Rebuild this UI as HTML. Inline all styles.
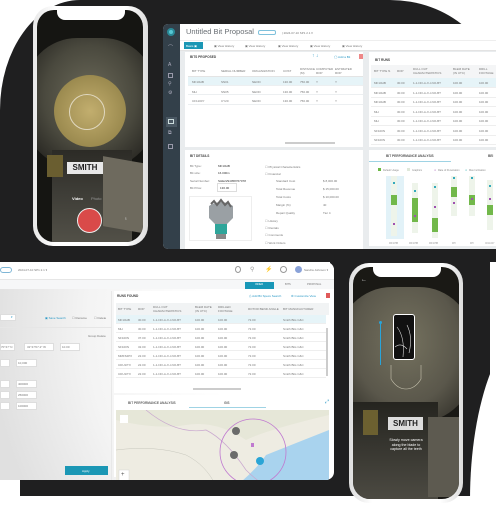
<!DOCTYPE html>
<html><head><meta charset="utf-8"><style>
*{margin:0;padding:0;box-sizing:border-box}
body{width:496px;height:496px;overflow:hidden;background:#fff;position:relative;font-family:"Liberation Sans",sans-serif}
.a{position:absolute}
.t{position:absolute;font-size:3px;color:#777;white-space:nowrap}
.hd{position:absolute;font-size:3.2px;color:#444;font-weight:bold;white-space:nowrap}
.row{position:absolute;height:9px;border-bottom:1px solid #eceff1;}
</style></head><body>
<div class="a" style="left:0;top:0;width:496px;height:262px;background:#1f1f20;border-top-left-radius:80px 110px;border-top-right-radius:106px 92px"></div>
<div class="a" style="left:330px;top:240px;width:160px;height:256px;background:#1f1f20"></div>
<div class="a" style="left:20px;top:460px;width:330px;height:36px;background:#1f1f20;border-top-left-radius:40px 20px"></div>
<div class="a" style="left:470px;top:320px;width:80px;height:200px;background:#fff;border-top-left-radius:70px 180px"></div>

<div class="a" style="left:0;top:262px;width:334px;height:218px;background:radial-gradient(circle at 110% 30%,#fff 40%,#f4f4f4 70%,#e0e0e0 95%);border-radius:0 8px 8px 0;overflow:hidden">
 <div class="a" style="left:0;top:0;width:334px;height:18px;background:#fff;border-bottom:1px solid #e6e6e6"></div>
 <div class="a" style="left:0;top:5px;width:12px;height:6px;border:1px solid #7fb6d6;border-radius:3px"></div>
 <div class="t" style="left:18px;top:6px">2024-07-10 SP1 2.1 ▾</div>
 <div class="a" style="left:235px;top:4px;width:6px;height:7px;border:1px solid #999;border-radius:50%"></div>
 <div class="t" style="left:250px;top:4px;font-size:6px;color:#999">⚲</div>
 <div class="t" style="left:265px;top:4px;font-size:6px;color:#999">⚡</div>
 <div class="a" style="left:280px;top:4px;width:7px;height:7px;border:1px solid #999;border-radius:50%"></div>
 <div class="a" style="left:295px;top:4px;width:7px;height:7px;background:#8aa2d8;border-radius:50%"></div>
 <div class="t" style="left:304px;top:6px">Sandra Johnson ▾</div>
 <div class="a" style="left:0;top:18px;width:334px;height:9px;background:#f6f7f8"></div>
 <div class="a" style="left:245px;top:20px;width:29px;height:7px;background:#1897b7"></div>
 <div class="t" style="left:255px;top:21px;color:#fff;font-size:2.6px">INNER</div>
 <div class="t" style="left:285px;top:21px;font-size:2.6px">BITS</div>
 <div class="t" style="left:307px;top:21px;font-size:2.6px">PROPOSAL</div>
 <div class="a" style="left:0;top:29px;width:112px;height:189px;border-right:1px solid #e8e8e8"></div>
 <div class="a" style="left:0;top:52px;width:16px;height:7px;border:1px solid #ddd;background:#fff"></div>
 <div class="t" style="left:11px;top:53px;color:#2b99c6">▾</div>
 <div class="t" style="left:45px;top:54px;color:#2b99c6">▣ Save Search</div>
 <div class="t" style="left:72px;top:54px">☐ Rename</div>
 <div class="t" style="left:94px;top:54px">☐ Delete</div>
 <div class="a" style="left:0;top:65px;width:112px;height:1px;background:#e6e6e6"></div>
 <div class="t" style="left:88px;top:72px">Group  Delete</div>
 <div class="a" style="left:0;top:81px;width:15px;height:8px;border:1px solid #ddd;background:#fff"></div>
 <div class="t" style="left:1px;top:83px">70°47′ N</div>
 <div class="a" style="left:24px;top:81px;width:30px;height:8px;border:1px solid #ddd;background:#fff"></div>
 <div class="t" style="left:27px;top:83px">32°47′07.2″ W</div>
 <div class="a" style="left:60px;top:81px;width:20px;height:8px;border:1px solid #ddd;background:#fff"></div>
 <div class="t" style="left:62px;top:83px">10.00</div>
 <div class="a" style="left:0;top:97px;width:10px;height:8px;border:1px solid #ddd;background:#fff"></div>
 <div class="a" style="left:16px;top:97px;width:21px;height:8px;border:1px solid #ddd;background:#fff"></div>
 <div class="t" style="left:18px;top:99px">10,000</div>
 <div class="a" style="left:0;top:118px;width:10px;height:8px;border:1px solid #ddd;background:#fff"></div>
 <div class="a" style="left:16px;top:118px;width:21px;height:8px;border:1px solid #ddd;background:#fff"></div>
 <div class="t" style="left:18px;top:120px">400000</div>
 <div class="a" style="left:0;top:129px;width:10px;height:8px;border:1px solid #ddd;background:#fff"></div>
 <div class="a" style="left:16px;top:129px;width:21px;height:8px;border:1px solid #ddd;background:#fff"></div>
 <div class="t" style="left:18px;top:131px">250000</div>
 <div class="a" style="left:0;top:140px;width:10px;height:8px;border:1px solid #ddd;background:#fff"></div>
 <div class="a" style="left:16px;top:140px;width:21px;height:8px;border:1px solid #ddd;background:#fff"></div>
 <div class="t" style="left:18px;top:142px">100000</div>
 <div class="a" style="left:65px;top:204px;width:43px;height:9px;background:#1b97b5"></div>
 <div class="t" style="left:82px;top:207px;color:#fff">Apply</div>
 <div class="a" style="left:114px;top:29px;width:217px;height:102px;background:#fff"></div>
 <div class="hd" style="left:117px;top:32px">RUNS FOUND</div>
 <div class="t" style="left:249px;top:32px;color:#2b99c6">⎙ Add Bit Specs Search</div>
 <div class="t" style="left:291px;top:32px;color:#2b99c6">⚙ Customize View</div>
 <div class="a" style="left:326px;top:31px;width:4px;height:5px;background:#e05a5a"></div>
 <div class="a" style="left:116px;top:41px;width:213px;height:12px;background:#f1f3f4"></div>
 <div class="t" style="left:118px;top:45px">BIT TYPE</div><div class="t" style="left:138px;top:45px">ROP</div><div class="t" style="left:153px;top:43px">DULL OUT<br>CHARACTERISTICS</div><div class="t" style="left:195px;top:43px">BLEM DATE<br>(IN UTC)</div><div class="t" style="left:218px;top:43px">DRILLED<br>FOOTAGE</div><div class="t" style="left:248px;top:45px">ROTOR BEND ANGLE</div><div class="t" style="left:283px;top:45px">BIT MANUFACTURER</div>
 <div id="rows"></div>
 <div class="a" style="left:193px;top:126px;width:48px;height:2px;background:#ccc"></div>
 <div class="a" style="left:326px;top:66px;width:2px;height:48px;background:#ccc"></div>
 <div class="a" style="left:114px;top:133px;width:217px;height:82px;background:#fff"></div>
 <div class="hd" style="left:128px;top:139px;color:#666">BIT PERFORMANCE ANALYSIS</div>
 <div class="hd" style="left:224px;top:139px;color:#666">GIS</div>
 <div class="a" style="left:189px;top:145px;width:77px;height:1px;background:#9fd3e4"></div>
 <div class="t" style="left:325px;top:137px;color:#2b99c6;font-size:5px">⤢</div>
 <svg class="a" style="left:116px;top:148px" width="213" height="76" viewBox="0 0 213 76">
  <rect width="213" height="76" fill="#eeece2"/>
  <path d="M0 10 Q40 20 70 15 Q100 10 130 30 Q150 20 213 5 L213 0 L0 0Z" fill="#e6e7d8"/>
  <path d="M120 76 Q140 60 150 45 Q175 35 213 20 L213 76Z" fill="#a9d3ee"/>
  <path d="M30 0 Q60 25 90 20 Q110 30 130 60 Q140 70 150 76" stroke="#c9a8cf" stroke-width="0.7" fill="none"/>
  <path d="M0 40 Q40 35 70 45 Q90 55 100 76" stroke="#c7c7bd" stroke-width="0.5" fill="none"/>
  <circle cx="137" cy="42" r="33" fill="none" stroke="#c07ad0" stroke-width="0.8"/>
  <circle cx="120" cy="21" r="4" fill="#6b6b6b"/><circle cx="118" cy="45" r="4" fill="#6b6b6b"/>
  <circle cx="144" cy="51" r="4" fill="#2aa5d6"/>
  <rect x="135" y="33" width="3" height="4" fill="#c07ad0"/>
  <rect x="3" y="60" width="10" height="14" fill="#fff" stroke="#ccc" stroke-width="0.4"/>
  <text x="5" y="66" font-size="6" fill="#555">+</text><text x="5" y="73" font-size="6" fill="#555">−</text>
  <rect x="4" y="5" width="8" height="8" fill="#fff"/>
 </svg>
</div>

<div class="a" style="left:163px;top:24px;width:340px;height:225px;background:#e9ecee;border-radius:5px 0 0 5px;overflow:hidden">
 <div class="a" style="left:0;top:0;width:17px;height:225px;background:#33404a"></div>
 <div class="a" style="left:4px;top:4px;width:8px;height:8px;border-radius:50%;background:#57c7d4;border:2px solid #2a8a98"></div>
 <div class="t" style="left:5px;top:20px;color:#aab;font-size:5px">⌒</div>
 <div class="t" style="left:5px;top:38px;color:#aab;font-size:5px">A</div>
 <div class="a" style="left:5px;top:49px;width:5px;height:5px;border:1px solid #99a"></div>
 <div class="t" style="left:5px;top:57px;color:#aab;font-size:5px">⚲</div>
 <div class="t" style="left:5px;top:66px;color:#aab;font-size:5px">⚙</div>
 <div class="a" style="left:3px;top:93px;width:11px;height:10px;background:#4a5863"></div>
 <div class="a" style="left:5px;top:95px;width:6px;height:5px;border:1px solid #cdd"></div>
 <div class="t" style="left:5px;top:106px;color:#aab;font-size:5px">⧉</div>
 <div class="a" style="left:5px;top:120px;width:5px;height:5px;border:1px solid #99a"></div>
 <div class="a" style="left:17px;top:0;width:323px;height:16px;background:#fff"></div>
 <div class="a" style="left:23px;top:3px;font-size:7.5px;color:#6a6f74;white-space:nowrap">Untitled Bit Proposal</div>
 <div class="a" style="left:95px;top:6px;width:18px;height:5px;border:1px solid #7fc1dc;border-radius:2px"></div>
 <div class="t" style="left:119px;top:7px">| 2024-07-10 SP1 2.1 ▾</div>
 <div class="a" style="left:17px;top:16px;width:323px;height:11px;background:#fff;border-top:1px solid #eee;border-bottom:1px solid #e3e3e3"></div>
 <div class="a" style="left:21px;top:18px;width:19px;height:7px;background:#1b97b5"></div>
 <div class="t" style="left:23px;top:20px;color:#fff">Basis ▣</div>
 <div class="t" style="left:51px;top:20px">▣ View History</div><div class="t" style="left:82px;top:20px">▣ View History</div><div class="t" style="left:115px;top:20px">▣ View History</div><div class="t" style="left:147px;top:20px">▣ View History</div><div class="t" style="left:179px;top:20px">▣ View History</div>
 <div class="a" style="left:22px;top:28px;width:178px;height:95px;background:#fff"></div>
 <div class="hd" style="left:27px;top:31px">BITS PROPOSED</div>
 <div class="t" style="left:149px;top:29px;color:#2b99c6;font-size:5px">↑  ↓</div>
 <div class="t" style="left:171px;top:31px;color:#2b99c6">◯ Add a Bit</div>
 <div class="a" style="left:196px;top:30px;width:4px;height:5px;background:#e88"></div>
 <div class="a" style="left:25px;top:40px;width:175px;height:13px;border-bottom:1px solid #e4e4e4"></div>
 <div class="t" style="left:29px;top:45px">BIT TYPE</div><div class="t" style="left:58px;top:45px">SERIAL NUMBER</div><div class="t" style="left:89px;top:45px">ORGANIZATION</div><div class="t" style="left:120px;top:45px">COST</div><div class="t" style="left:137px;top:43px">DISTANCE<br>(M)</div><div class="t" style="left:153px;top:43px">COMPUTED<br>ROP</div><div class="t" style="left:172px;top:43px">ESTIMATED<br>ROP</div>
 <div class="a" style="left:25px;top:53px;width:175px;height:9px;background:#e6f4f8"></div>
 <div class="row" style="left:25px;top:53px;width:175px"></div><div class="row" style="left:25px;top:62px;width:175px"></div><div class="row" style="left:25px;top:72px;width:175px"></div>
 <div class="t" style="left:29px;top:56px">MF10HB</div><div class="t" style="left:58px;top:56px">SN01</div><div class="t" style="left:89px;top:56px">NEOD</div><div class="t" style="left:120px;top:56px">130.00</div><div class="t" style="left:137px;top:56px">750.00</div><div class="t" style="left:153px;top:56px">Y</div><div class="t" style="left:172px;top:56px">Y</div>
 <div class="t" style="left:29px;top:66px">MH</div><div class="t" style="left:58px;top:66px">SN05</div><div class="t" style="left:89px;top:66px">NEOD</div><div class="t" style="left:120px;top:66px">130.00</div><div class="t" style="left:137px;top:66px">750.00</div><div class="t" style="left:153px;top:66px">Y</div><div class="t" style="left:172px;top:66px">Y</div>
 <div class="t" style="left:29px;top:75px">CF1100Y</div><div class="t" style="left:58px;top:75px">CY20</div><div class="t" style="left:89px;top:75px">NEOD</div><div class="t" style="left:120px;top:75px">130.00</div><div class="t" style="left:137px;top:75px">750.00</div><div class="t" style="left:153px;top:75px">Y</div><div class="t" style="left:172px;top:75px">Y</div>
 <div class="a" style="left:122px;top:118px;width:50px;height:2px;background:#ccc"></div>
 <div class="a" style="left:206px;top:28px;width:134px;height:95px;background:#fff"></div>
 <div class="hd" style="left:212px;top:34px">BIT RUNS</div>
 <div class="a" style="left:208px;top:41px;width:132px;height:13px;background:#f4f5f6"></div>
 <div class="t" style="left:211px;top:45px">BIT TYPE ⇅</div><div class="t" style="left:234px;top:45px">ROP</div><div class="t" style="left:250px;top:43px">DULL OUT<br>CHARACTERISTICS</div><div class="t" style="left:290px;top:43px">BLEM DATE<br>(IN UTC)</div><div class="t" style="left:316px;top:43px">DRILL<br>FOOTAGE</div>
 <div class="a" style="left:208px;top:54px;width:132px;height:9px;background:#e6f4f8"></div>
 <div id="br"></div>
 <div class="a" style="left:22px;top:126px;width:178px;height:99px;background:#fff"></div>
 <div class="hd" style="left:27px;top:130px">BIT DETAILS</div>
 <div class="t" style="left:27px;top:140px">Bit Type:</div><div class="t" style="left:55px;top:140px;color:#333">MF10HB</div>
 <div class="t" style="left:27px;top:147px">Bit size:</div><div class="t" style="left:55px;top:147px;color:#333">16.000in</div>
 <div class="t" style="left:27px;top:155px">Serial Number:</div><div class="t" style="left:55px;top:155px;color:#333">SHE2294058767078</div>
 <div class="a" style="left:54px;top:159px;width:20px;height:9px;border:1px solid #ddd"></div>
 <div class="t" style="left:27px;top:162px">Bit Price:</div><div class="t" style="left:57px;top:162px;color:#333">130.00</div>
 <div class="a" style="left:26px;top:172px;width:63px;height:45px;border:1px solid #eee"></div>
 <svg class="a" style="left:40px;top:174px" width="36" height="42" viewBox="0 0 36 42"><path d="M6 8 Q18 0 30 8 L30 20 L24 26 L12 26 L6 20Z" fill="#9aa0a4"/><path d="M8 6 l3-3 l3 4 l4-5 l4 5 l3-3 l3 5" stroke="#666" stroke-width="2" fill="none"/><rect x="12" y="26" width="12" height="10" fill="#2fa59a"/><rect x="13" y="36" width="10" height="5" fill="#888"/></svg>
 <div class="t" style="left:102px;top:141px">☐ Physical Characteristics</div>
 <div class="t" style="left:102px;top:148px">☐ Financial</div>
 <div class="t" style="left:113px;top:155px">Standard Cost</div><div class="t" style="left:160px;top:155px">$ 8,000.00</div>
 <div class="t" style="left:113px;top:163px">Total Revenue</div><div class="t" style="left:160px;top:163px">$ 15,000.00</div>
 <div class="t" style="left:113px;top:171px">Total Costs</div><div class="t" style="left:160px;top:171px">$ 10,000.00</div>
 <div class="t" style="left:113px;top:179px">Margin (%)</div><div class="t" style="left:160px;top:179px">40</div>
 <div class="t" style="left:113px;top:187px">Repair Quality</div><div class="t" style="left:160px;top:187px">Tier 4</div>
 <div class="t" style="left:102px;top:195px">☐ History</div><div class="t" style="left:102px;top:202px">☐ Rentals</div><div class="t" style="left:102px;top:209px">☐ Comments</div><div class="t" style="left:102px;top:217px">☐ Work Orders</div>
 <div class="a" style="left:206px;top:126px;width:134px;height:96px;background:#fff"></div>
 <div class="hd" style="left:223px;top:130px;color:#555">BIT PERFORMANCE ANALYSIS</div>
 <div class="hd" style="left:325px;top:130px;color:#555">BEI</div>
 <div class="a" style="left:206px;top:137px;width:82px;height:1px;background:#9fd3e4"></div>
 <svg class="a" style="left:206px;top:140px" width="134" height="84" viewBox="0 0 134 84">
  <rect x="9" y="4" width="3" height="3" fill="#6cb844"/><text x="14" y="7" font-size="2.5" fill="#888">Default Usage</text>
  <rect x="38" y="4" width="3" height="3" fill="#dfe8da"/><text x="43" y="7" font-size="2.5" fill="#888">Graphics</text>
  <text x="65" y="7" font-size="2.5" fill="#a050b0">✦</text><text x="69" y="7" font-size="2.5" fill="#888">Rate of Penetration</text>
  <text x="96" y="7" font-size="2.5" fill="#2aa">✦</text><text x="100" y="7" font-size="2.5" fill="#888">Max Inclination</text>
  <rect x="17" y="12" width="18" height="63" fill="#e2f2f8"/>
  <g fill="#eef4ea"><rect x="22" y="12" width="6" height="60"/><rect x="43" y="19" width="6" height="50"/><rect x="63" y="19" width="6" height="55"/><rect x="82" y="12" width="6" height="40"/><rect x="100" y="12" width="6" height="40"/><rect x="118" y="16" width="6" height="50"/></g>
  <g fill="#72b84a"><rect x="22" y="31" width="6" height="10"/><rect x="43" y="34" width="6" height="24"/><rect x="63" y="54" width="6" height="14"/><rect x="82" y="23" width="6" height="10"/><rect x="100" y="31" width="6" height="10"/><rect x="118" y="41" width="6" height="10"/></g>
  <g fill="#a050b0"><rect x="24" y="59" width="2" height="2"/><rect x="45" y="51" width="2" height="2"/><rect x="65" y="42" width="2" height="2"/><rect x="84" y="38" width="2" height="2"/><rect x="102" y="34" width="2" height="2"/><rect x="120" y="34" width="2" height="2"/></g>
  <g fill="#3ab"><rect x="24" y="18" width="2" height="2"/><rect x="45" y="26" width="2" height="2"/><rect x="65" y="22" width="2" height="2"/><rect x="84" y="13" width="2" height="2"/><rect x="102" y="13" width="2" height="2"/><rect x="120" y="21" width="2" height="2"/></g>
  <g font-size="2.3" fill="#999"><text x="20" y="80">MF10HB</text><text x="40" y="80">MF10HB</text><text x="60" y="80">MF10HB</text><text x="83" y="80">MH</text><text x="101" y="80">MH</text><text x="116" y="80">CF1100Y</text></g>
 </svg>
</div>

<!-- phone 1 -->
<div class="a" style="left:33px;top:6px;width:115px;height:240px;background:linear-gradient(90deg,#e8e8e8,#fff 20%,#fff 80%,#ddd);border-radius:20px"></div>
<div class="a" style="left:37px;top:10px;width:106px;height:232px;border-radius:17px;overflow:hidden;background:#151512">
 <div class="a" style="left:-12px;top:28px;width:130px;height:130px;border-radius:40%;background:radial-gradient(ellipse at 50% 45%,#6c6a5a,#4a493e 50%,#2a2924 80%)"></div>
 <div class="a" style="left:15px;top:140px;width:80px;height:100px;background:linear-gradient(#2c2b26,#3d3c36 40%,#55534a)"></div>
 <div class="a" style="left:10px;top:145px;width:16px;height:22px;background:#6a5e30"></div>
 <div class="a" style="left:30px;top:152px;width:36px;height:12px;background:#e8e8e8;font:bold 8px 'Liberation Sans';color:#222;text-align:center;line-height:12px">SMITH</div>
 <div class="a" style="left:66px;top:150px;width:44px;height:70px;background:#6e6a5e;transform:skewY(10deg)"></div>
 <div class="a" style="left:17px;top:65px;width:72px;height:72px;border-radius:50%;background:radial-gradient(#c2ae6e,#9b8a4f 70%,#6d6238)"></div>
 <div class="a" style="left:32px;top:84px;width:36px;height:36px;border-radius:50%;border:1px solid #e0d8c0"></div>
 <div class="a" style="left:20px;top:0;width:68px;height:10px;background:#fff;border-radius:0 0 8px 8px"></div>
 <div class="a" style="left:35px;top:186px;font-size:4px;color:#fff;font-weight:bold">Video</div>
 <div class="a" style="left:54px;top:186px;font-size:4px;color:#999">Photo</div>
 <div class="a" style="left:40px;top:198px;width:25px;height:25px;border-radius:50%;background:#d94a49;border:1px solid #eee"></div>
 <div class="a" style="left:87px;top:206px;font-size:5px;color:#ddd">♁</div>
</div>

<!-- phone 2 -->
<div class="a" style="left:349px;top:263px;width:114px;height:240px;background:linear-gradient(90deg,#ddd,#fff 20%,#fff 80%,#ddd);border-radius:20px"></div>
<div class="a" style="left:353px;top:267px;width:106px;height:232px;border-radius:17px;overflow:hidden;background:#1a1915">
 <div class="a" style="left:-15px;top:20px;width:135px;height:135px;border-radius:40%;background:radial-gradient(ellipse at 50% 40%,#75725f,#5a574b 55%,#35332c 85%)"></div>
 <div class="a" style="left:0;top:135px;width:85px;height:100px;background:linear-gradient(#25241f,#35342e 40%,#4d4b43)"></div>
 <div class="a" style="left:10px;top:143px;width:15px;height:25px;background:#6c6030"></div>
 <div class="a" style="left:35px;top:150px;width:35px;height:13px;background:#ddd;font:bold 8px 'Liberation Sans';color:#222;text-align:center;line-height:13px">SMITH</div>
 <div class="a" style="left:75px;top:150px;width:35px;height:80px;background:#5d5a50"></div>
 <div class="a" style="left:20px;top:0;width:68px;height:10px;background:#fff;border-radius:0 0 8px 8px"></div>
 <div class="a" style="left:8px;top:10px;font-size:6px;color:#ddd">←</div>
 <div class="a" style="left:40px;top:47px;width:22px;height:46px;background:#111;border:1.5px solid #fff;border-radius:3px"></div>
 <svg class="a" style="left:36px;top:50px" width="34" height="75" viewBox="0 0 34 75"><path d="M8 10 Q16 20 14 40 M18 8 Q24 20 20 36 M6 30 Q12 25 18 32" stroke="#ddd" stroke-width="0.6" fill="none"/><path d="M2 48 L2 62 Q8 72 17 72 Q26 72 32 62 L32 48" stroke="#c8c4b0" stroke-width="0.6" fill="none"/></svg>
 <div class="a" style="left:27px;top:56px;width:1px;height:42px;background:#29a4d9"></div>
 <div class="a" style="left:26px;top:54px;width:3px;height:3px;border-radius:50%;background:#29a4d9"></div>
 <div class="a" style="left:16px;top:171px;width:74px;font-size:3.6px;color:#fff;text-align:center;line-height:4.6px">Slowly move camera<br>along the blade to<br>capture all the teeth</div>
</div>

<script>
var r=document.getElementById('rows'),h='';
var d=[["MF10HB","30.00"],["MH","30.00"],["SF100N","37.00"],["SF100N","32.00"],["MMF64PX","22.00"],["CDU1ITX","22.00"],["CDU1ITX","22.00"]];
for(var i=0;i<7;i++){var y=53+i*9;h+='<div class="a" style="left:116px;top:'+y+'px;width:210px;height:9px;border-bottom:1px solid #eee;'+(i==0?'background:#e6f4f8':'')+'"></div><div class="t" style="left:118px;top:'+(y+3)+'px">'+d[i][0]+'</div><div class="t" style="left:138px;top:'+(y+3)+'px">'+d[i][1]+'</div><div class="t" style="left:153px;top:'+(y+3)+'px">1-1-NO-A-X-I-NO-BT</div><div class="t" style="left:195px;top:'+(y+3)+'px">100.00</div><div class="t" style="left:218px;top:'+(y+3)+'px">100.00</div><div class="t" style="left:248px;top:'+(y+3)+'px">72.00</div><div class="t" style="left:283px;top:'+(y+3)+'px">Smith Bits C&C</div>';}
r.innerHTML=h;
var b=document.getElementById('br'),g='';
var e=["MF10HB","MF10HB","MF10HB","MH","MH","SF100N","SF100N"];
for(var i=0;i<7;i++){var y=54+i*9.5;g+='<div class="a" style="left:208px;top:'+(y+9)+'px;width:132px;height:1px;background:#eee"></div><div class="t" style="left:211px;top:'+(y+3)+'px">'+e[i]+'</div><div class="t" style="left:234px;top:'+(y+3)+'px">30.00</div><div class="t" style="left:250px;top:'+(y+3)+'px">1-1-NO-A-X-I-NO-BT</div><div class="t" style="left:290px;top:'+(y+3)+'px">100.00</div><div class="t" style="left:316px;top:'+(y+3)+'px">100.00</div>';}
b.innerHTML=g;
</script>
</body></html>
